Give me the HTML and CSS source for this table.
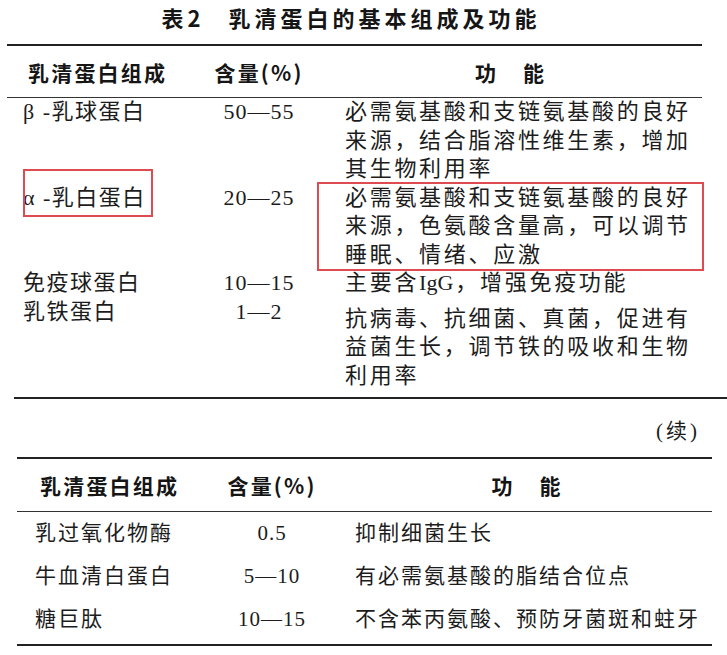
FILE: index.html
```html
<!DOCTYPE html>
<html lang="zh-CN">
<head>
<meta charset="utf-8">
<title>表2 乳清蛋白的基本组成及功能</title>
<link rel="stylesheet" href="styles.css">
</head>
<body>
<div class="page">
  <h1 class="title"><span class="tno">表2</span><span class="tname">乳清蛋白的基本组成及功能</span></h1>

  <div class="tbl t1">
    <div class="row head">
      <div class="c1">乳清蛋白组成</div>
      <div class="c2">含量(%)</div>
      <div class="c3"><span>功</span><span>能</span></div>
    </div>
    <div class="body">
      <div class="row item">
        <div class="c1">β -乳球蛋白</div>
        <div class="c2">50—55</div>
        <div class="c3">必需氨基酸和支链氨基酸的良好来源，结合脂溶性维生素，增加其生物利用率</div>
      </div>
      <div class="row item">
        <div class="c1">α -乳白蛋白</div>
        <div class="c2">20—25</div>
        <div class="c3">必需氨基酸和支链氨基酸的良好来源，色氨酸含量高，可以调节睡眠、情绪、应激</div>
        <div class="mark mark-name"></div>
        <div class="mark mark-func"></div>
      </div>
      <div class="row item">
        <div class="c1">免疫球蛋白</div>
        <div class="c2">10—15</div>
        <div class="c3">主要含<span class="lat">IgG</span>，增强免疫功能</div>
      </div>
      <div class="row item">
        <div class="c1">乳铁蛋白</div>
        <div class="c2">1—2</div>
        <div class="c3 lower">抗病毒、抗细菌、真菌，促进有益菌生长，调节铁的吸收和生物利用率</div>
      </div>
    </div>
  </div>
  <div class="rule-end"></div>

  <div class="cont">(续)</div>

  <div class="tbl t2">
    <div class="row head">
      <div class="c1">乳清蛋白组成</div>
      <div class="c2">含量(%)</div>
      <div class="c3"><span>功</span><span>能</span></div>
    </div>
    <div class="body">
      <div class="row item">
        <div class="c1">乳过氧化物酶</div>
        <div class="c2">0.5</div>
        <div class="c3">抑制细菌生长</div>
      </div>
      <div class="row item">
        <div class="c1">牛血清白蛋白</div>
        <div class="c2">5—10</div>
        <div class="c3">有必需氨基酸的脂结合位点</div>
      </div>
      <div class="row item">
        <div class="c1">糖巨肽</div>
        <div class="c2">10—15</div>
        <div class="c3">不含苯丙氨酸、预防牙菌斑和蛀牙</div>
      </div>
    </div>
  </div>
</div>
</body>
</html>
```

FILE: styles.css
```css
* { box-sizing: border-box; }

html, body {
  margin: 0;
  padding: 0;
  background: #ffffff;
}

body {
  width: 727px;
  height: 655px;
  overflow: hidden;
  color: #1c1c1c;
  font-family: "Liberation Serif", "Noto Sans CJK SC", serif;
}

.title {
  margin: 0;
  padding: 2px 25px 0 0;
  text-align: center;
  font: 700 22px/30px "Noto Sans CJK SC", sans-serif;
  letter-spacing: 4px;
  color: #151515;
}

.title .tname { margin-left: 24px; }

.tbl { width: 695px; border-top: 2px solid #222; }

.t1 { margin: 12px 0 0 7px; }
.t2 { margin: 11px 0 0 17px; border-bottom: 2px solid #222; }

.row { display: grid; }
.t1 .row { grid-template-columns: 166px 172px 1fr; }
.t2 .row { grid-template-columns: 173px 164px 1fr; }

.c2 { text-align: center; }

.head {
  height: 52px;
  align-items: center;
  border-bottom: 1px solid #333;
  font: 700 21px/30px "Noto Sans CJK SC", sans-serif;
  letter-spacing: 2.2px;
  color: #151515;
}
.t2 .head { height: 53px; }

.t1 .head .c1 { padding-left: 21px; }
.t2 .head .c1 { padding-left: 23px; }
.head .c3 {
  display: flex;
  justify-content: center;
  gap: 27px;
  letter-spacing: 0;
  padding-right: 28px;
}
.t2 .head .c3 { padding-right: 14px; }

/* table 1 body */
.t1 .body {
  padding-bottom: 7px;
  font-size: 22px;
  line-height: 28.5px;
}
.item { position: relative; }
.t1 .body .c1 { padding-left: 16px; letter-spacing: 1.5px; }
.t1 .body .c2 { letter-spacing: 1px; }
.t1 .body .c3 { letter-spacing: 2.7px; }
.t1 .body .c3.lower { padding-top: 7px; }
.t1 .body .c3 .lat { letter-spacing: 0; margin-right: 2px; }

/* annotation boxes */
.mark {
  position: absolute;
  border: 2px solid #de4b50;
}
.mark-name { top: -15px; left: 16px; width: 130px; height: 48px; }
.mark-func { top: -2px; left: 310px; width: 387px; height: 89px; }

.rule-end {
  margin-left: 14px;
  height: 2px;
  background: #222;
}

.cont {
  margin-top: 17px;
  line-height: 30px;
  text-align: right;
  padding-right: 27px;
  font-size: 21px;
  letter-spacing: 3px;
}

/* table 2 body */
.t2 .body {
  padding-bottom: 3px;
  font-size: 21px;
  line-height: 43px;
  letter-spacing: 2px;
}
.t2 .body .c1 { padding-left: 18px; }
.t2 .body .c2 { letter-spacing: 1px; }
.t2 .body .c3 { padding-left: 1px; }
```
